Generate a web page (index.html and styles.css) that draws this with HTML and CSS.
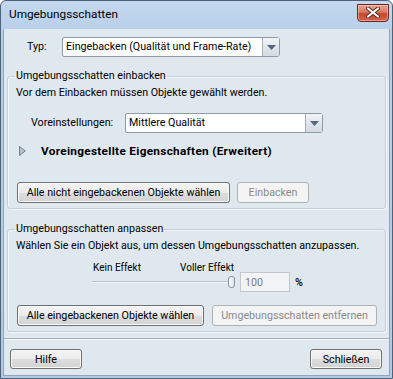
FILE: index.html
```html
<!DOCTYPE html>
<html lang="de">
<head>
  <meta charset="UTF-8">
  <meta name="viewport" content="width=device-width, initial-scale=1.0">
  <title>Umgebungsschatten</title>
  <link rel="stylesheet" href="styles.css">
</head>
<body>
  <div class="window">
    <div class="titlebar">
      <span class="title">Umgebungsschatten</span>
      <button class="close-btn" title="Schließen">
        <svg width="14" height="11" viewBox="0 0 14 11">
          <path d="M2 1.5 L12 9.5 M12 1.5 L2 9.5" stroke="#5a2a22" stroke-width="4" stroke-linecap="round"/>
          <path d="M2 1.5 L12 9.5 M12 1.5 L2 9.5" stroke="#ffffff" stroke-width="2.2" stroke-linecap="round"/>
        </svg>
      </button>
    </div>

    <div class="client">
      <div class="type-row">
        <label class="type-label">Typ:</label>
        <div class="combo combo-type">
          <span class="combo-value">Eingebacken (Qualität und Frame-Rate)</span>
          <span class="combo-arrow">
            <svg width="9" height="5" viewBox="0 0 9 5"><polygon points="0,0 9,0 4.5,5" fill="#56677e"/></svg>
          </span>
        </div>
      </div>

      <fieldset class="group group-bake">
        <legend>Umgebungsschatten einbacken</legend>
        <p class="hint">Vor dem Einbacken müssen Objekte gewählt werden.</p>
        <div class="preset-row">
          <label class="preset-label">Voreinstellungen:</label>
          <div class="combo combo-preset">
            <span class="combo-value">Mittlere Qualität</span>
            <span class="combo-arrow">
              <svg width="9" height="5" viewBox="0 0 9 5"><polygon points="0,0 9,0 4.5,5" fill="#56677e"/></svg>
            </span>
          </div>
        </div>
        <div class="expander">
          <svg width="7" height="10" viewBox="0 0 7 10"><polygon points="0.5,0.5 6.2,5 0.5,9.5" fill="#b7c4d2" stroke="#6a7d92" stroke-width="1" stroke-linejoin="round"/></svg>
          <span>Voreingestellte Eigenschaften (Erweitert)</span>
        </div>
        <div class="btn-row">
          <button class="btn btn-select-unbaked">Alle nicht eingebackenen Objekte wählen</button>
          <button class="btn btn-bake" disabled>Einbacken</button>
        </div>
      </fieldset>

      <fieldset class="group group-adjust">
        <legend>Umgebungsschatten anpassen</legend>
        <p class="hint">Wählen Sie ein Objekt aus, um dessen Umgebungsschatten anzupassen.</p>
        <div class="slider-row">
          <div class="slider">
            <div class="slider-labels">
              <span>Kein Effekt</span>
              <span>Voller Effekt</span>
            </div>
            <div class="slider-track">
              <span class="slider-thumb"></span>
            </div>
          </div>
          <input class="amount" type="text" value="100" disabled>
          <span class="percent">%</span>
        </div>
        <div class="btn-row">
          <button class="btn btn-select-baked">Alle eingebackenen Objekte wählen</button>
          <button class="btn btn-remove" disabled>Umgebungsschatten entfernen</button>
        </div>
      </fieldset>

      <div class="separator"></div>

      <div class="footer">
        <button class="btn btn-footer">Hilfe</button>
        <button class="btn btn-footer">Schließen</button>
      </div>
    </div>
  </div>
</body>
</html>
```

FILE: styles.css
```css
body {
  margin: 0;
  padding: 0;
  font-family: Roboto, "Liberation Sans", sans-serif;
  font-size: 10.7px;
  line-height: 16px;
  color: #000;
  background: #fff;
}
.window {
  width: 393px;
  height: 379px;
  box-sizing: border-box;
  border: 1px solid #4f6277;
  border-radius: 6px 6px 0 0;
  background: linear-gradient(#c3d8ee, #b5cde7 40px, #b1c9e4);
  padding: 0 2px 2px;
  display: flex;
  flex-direction: column;
  overflow: hidden;
}
.titlebar {
  height: 28px;
  display: flex;
  align-items: center;
  justify-content: space-between;
  padding: 0 1px 0 6px;
  flex-shrink: 0;
}
.title {
  font-size: 11.8px;
  color: #000;
  margin-top: -3px;
}
.close-btn {
  width: 32px;
  height: 18px;
  margin-top: -5px;
  padding: 0;
  border: 1px solid #6b2b22;
  border-radius: 0 0 4px 4px;
  background: linear-gradient(#e7a595, #d77860 45%, #c4472f 55%, #d2674c);
  box-shadow: inset 0 0 0 1px rgba(255, 210, 200, 0.5);
  display: flex;
  align-items: center;
  justify-content: center;
}
.client {
  flex: 1;
  min-height: 0;
  overflow: hidden;
  background: #dfe7ef;
  border: 1px solid #8ea5bd;
  border-top: none;
  display: flex;
  flex-direction: column;
}

/* combo boxes */
.type-row {
  display: flex;
  align-items: center;
  padding: 8px 0 0 23px;
}
.type-label {
  width: 35px;
}
.combo {
  height: 20px;
  box-sizing: border-box;
  display: flex;
  border: 1px solid #8e9aa6;
  border-radius: 2px 3px 3px 2px;
  background: #fff;
}
.combo-type {
  width: 218px;
}
.combo-preset {
  width: 198px;
}
.combo-value {
  flex: 1;
  padding-left: 3px;
  line-height: 18px;
  white-space: nowrap;
  overflow: hidden;
}
.combo-arrow {
  width: 16px;
  border-left: 1px solid #a7b0ba;
  background: linear-gradient(#f3f5f7, #e1e6eb 50%, #d3dae1);
  display: flex;
  align-items: center;
  justify-content: center;
}

/* group boxes */
.group {
  margin: 11px 3px 0;
  padding: 0 7px 5px;
  border: 1px solid #c3ced9;
  border-radius: 3px;
  box-shadow: inset 1px 1px 0 #f3f6f9, 1px 1px 0 #f3f6f9;
}
.group legend {
  padding: 0 1px;
  line-height: 16px;
}
.group-adjust {
  margin-top: 12px;
}
.hint {
  margin: 1px 0 0 1px;
  white-space: nowrap;
}
.preset-row {
  display: flex;
  align-items: center;
  margin-top: 12px;
  padding-left: 16px;
}
.preset-label {
  width: 94px;
}
.expander {
  display: flex;
  align-items: center;
  margin-top: 10px;
  padding-left: 4px;
  font-size: 11.8px;
  letter-spacing: 0.3px;
  font-weight: bold;
}
.expander svg {
  margin-right: 15px;
}

/* buttons */
.btn-row {
  display: flex;
  gap: 7px;
  margin-top: 23px;
  padding-left: 2px;
}
.btn {
  height: 21px;
  box-sizing: border-box;
  padding: 0;
  white-space: nowrap;
  font-family: inherit;
  font-size: 10.7px;
  color: #000;
  border: 1px solid #707070;
  border-radius: 3px;
  background: linear-gradient(#f4f4f4, #ebebeb 50%, #dddddd 51%, #d3d3d3);
  box-shadow: inset 0 0 0 1px #fafafa;
}
.btn:disabled {
  color: #8a8a8a;
  border-color: #adb2b5;
  background: #f4f4f4;
  box-shadow: none;
}
.btn-select-unbaked { width: 213px; }
.btn-bake { width: 72px; }
.btn-select-baked { width: 187px; }
.btn-remove { width: 165px; }

/* slider */
.slider-row {
  display: flex;
  align-items: flex-start;
  margin-top: 7px;
  padding-left: 77px;
}
.slider {
  width: 143px;
}
.slider-labels {
  display: flex;
  justify-content: space-between;
  padding: 0 1px;
  font-size: 10px;
  line-height: 14px;
}
.slider-track {
  position: relative;
  height: 14px;
}
.slider-track::before {
  content: "";
  position: absolute;
  left: 0;
  right: 0;
  top: 6px;
  height: 1px;
  background: #b9c2cb;
  border-bottom: 1px solid #f4f7fa;
}
.slider-thumb {
  position: absolute;
  right: 0;
  top: 1px;
  width: 7px;
  height: 12px;
  box-sizing: border-box;
  border: 1px solid #8a949e;
  border-radius: 3px;
  background: linear-gradient(90deg, #fbfbfb, #dfe3e7);
}
.amount {
  width: 50px;
  height: 20px;
  box-sizing: border-box;
  margin: 11px 0 0 5px;
  padding: 0 0 0 4px;
  border: 1px solid #c2c8ce;
  background: #f2f3f4;
  font-family: inherit;
  font-size: 10.7px;
  color: #7d7d7d;
}
.percent {
  margin: 14px 0 0 5px;
  font-weight: 500;
}
.group-adjust .btn-row {
  margin-top: 13px;
  gap: 8px;
}

/* footer */
.separator {
  margin-top: 6px;
  height: 1px;
  background: #a3adb8;
  border-bottom: 1px solid #f6f8fa;
}
.footer {
  display: flex;
  justify-content: space-between;
  margin-top: 9px;
  padding: 0 7px 0 6px;
}
.btn-footer {
  width: 72px;
  height: 20px;
}
```
